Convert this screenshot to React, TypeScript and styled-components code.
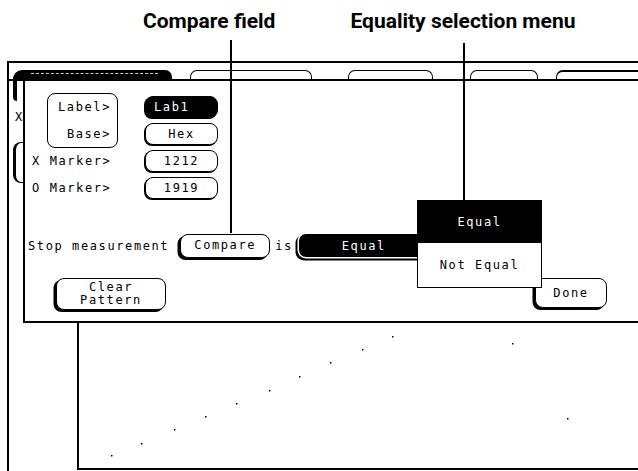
import React from "react";
import styled, { createGlobalStyle } from "styled-components";

const Global = createGlobalStyle`
  html, body { margin: 0; padding: 0; background: #fff; }
  body { width: 638px; height: 471px; overflow: hidden; }
`;

const HP = `"DejaVu Sans Mono", "Liberation Mono", monospace`;

const Page = styled.div`
  position: relative;
  width: 638px;
  height: 471px;
  overflow: hidden;
  background: #fff;
  color: #000;
  display: flex;
  flex-direction: column;
`;

const Header = styled.header`
  height: 61px;
  flex: none;
  display: flex;
  align-items: flex-start;
  padding-top: 10px;
  box-sizing: border-box;
`;

const Callout = styled.div<{ $left: number }>`
  margin-left: ${(p) => p.$left}px;
  font-family: Roboto, "Liberation Sans", sans-serif;
  font-weight: 700;
  font-size: 21px;
  line-height: 22px;
  white-space: nowrap;
`;

const Leader = styled.div`
  position: absolute;
  width: 1.5px;
  background: #000;
  z-index: 5;
`;

const Screen = styled.div`
  margin-left: 7px;
  flex: 1;
  min-height: 0;
  border-left: 2px solid #000;
  border-top: 2px solid #000;
  display: flex;
  flex-direction: column;
`;

const TabRow = styled.div`
  height: 16px;
  flex: none;
  border-bottom: 2px solid #000;
  display: flex;
  align-items: flex-end;
`;

const Tab = styled.div<{ $ml: number; $w: number; $bold?: boolean }>`
  flex: none;
  margin-left: ${(p) => p.$ml}px;
  width: ${(p) => p.$w}px;
  height: 9px;
  box-sizing: border-box;
  border: 1px solid #000;
  border-top-width: ${(p) => (p.$bold ? 2 : 1)}px;
  border-bottom: none;
  border-radius: 7px 7px 0 0;
`;

const ActiveTab = styled.div`
  flex: none;
  margin-left: 4px;
  width: 159px;
  height: 9px;
  background: #000;
  border-radius: 9px 7px 0 0;
  display: flex;
  align-items: flex-start;
  padding: 3px 14px 0 18px;
  box-sizing: border-box;
`;

const TabDots = styled.span`
  flex: 1;
  border-top: 1px dashed #fff;
  opacity: 0.8;
`;

const Body = styled.div`
  flex: 1;
  display: flex;
  flex-direction: column;
`;

const TopArea = styled.div`
  display: flex;
  flex: none;
`;

const Gutter = styled.div`
  width: 14px;
  flex: none;
  overflow: hidden;
  display: flex;
  flex-direction: column;
  align-items: flex-start;
`;

const Lip = styled.div`
  margin-left: 4px;
  width: 4px;
  height: 20px;
  background: #000;
  border-bottom-left-radius: 4px;
`;

const GhostText = styled.div`
  margin-top: 9px;
  margin-left: 6px;
  font-family: ${HP};
  font-size: 12px;
  line-height: 14px;
`;

const GhostBox = styled.div`
  margin-top: 18px;
  margin-left: 4px;
  width: 10px;
  height: 41px;
  box-sizing: border-box;
  border: 1.5px solid #000;
  border-left-width: 3px;
  border-right: none;
  border-radius: 8px 0 0 8px;
`;

const Dialog = styled.div`
  flex: 1;
  border-left: 2px solid #000;
  border-bottom: 2px solid #000;
  padding: 15px 0 11px 0;
  display: flex;
  flex-direction: column;
  font-family: ${HP};
  font-size: 12px;
  letter-spacing: 1.6px;
`;

const Grid = styled.div`
  margin-left: 5px;
  display: grid;
  grid-template-columns: 88px 73px;
  grid-auto-rows: 22px;
  column-gap: 27px;
  row-gap: 5px;
`;

const LabelBox = styled.div`
  grid-column: 1;
  grid-row: 1 / span 2;
  margin: -3px 0 -3px 17px;
  border: 1.5px solid #000;
  border-radius: 8px;
  display: flex;
  flex-direction: column;
  justify-content: space-around;
  align-items: flex-end;
  padding-right: 6px;
  line-height: 14px;
`;

const RowLabel = styled.div<{ $row: number }>`
  grid-column: 1;
  grid-row: ${(p) => p.$row};
  padding-left: 2px;
  align-self: center;
  line-height: 14px;
  white-space: nowrap;
`;

const Field = styled.div<{ $dark?: boolean; $row: number }>`
  grid-column: 2;
  grid-row: ${(p) => p.$row};
  box-sizing: border-box;
  border: 1.5px solid #000;
  border-radius: 8px;
  background: ${(p) => (p.$dark ? "#000" : "#fff")};
  color: ${(p) => (p.$dark ? "#fff" : "#000")};
  display: flex;
  align-items: center;
  justify-content: ${(p) => (p.$dark ? "flex-start" : "center")};
  padding-left: ${(p) => (p.$dark ? 8 : 0)}px;
  box-shadow: -1px 1px 0 #000;
  line-height: 14px;
`;

const StopRow = styled.div`
  margin-top: 34px;
  margin-left: 3px;
  height: 25px;
  display: flex;
  align-items: center;
  white-space: nowrap;
`;

const Button = styled.div<{ $w: number; $h: number; $ml?: number }>`
  flex: none;
  box-sizing: border-box;
  width: ${(p) => p.$w}px;
  height: ${(p) => p.$h}px;
  margin-left: ${(p) => p.$ml ?? 0}px;
  border: 1.5px solid #000;
  border-radius: 8px;
  background: #fff;
  box-shadow: -2.5px 2px 0 #000;
  display: flex;
  flex-direction: column;
  align-items: center;
  justify-content: center;
  line-height: 13px;
  text-align: center;
`;

const DarkButton = styled.div`
  flex: none;
  margin-left: 6px;
  width: 130px;
  height: 23px;
  box-sizing: border-box;
  background: #000;
  color: #fff;
  border-radius: 7px;
  box-shadow: 0 0 0 1.5px #fff, -2px 2px 0 1.5px #000;
  display: flex;
  align-items: center;
  justify-content: center;
  line-height: 14px;
`;

const Inline = styled.span<{ $ml: number }>`
  margin-left: ${(p) => p.$ml}px;
`;

const ButtonRow = styled.div`
  margin-top: 20px;
  padding: 0 31px;
  display: flex;
  justify-content: space-between;
  align-items: flex-start;
`;

const Chart = styled.div`
  margin-left: 68px;
  height: 145px;
  flex: none;
  border-left: 2px solid #000;
  border-bottom: 2px solid #000;
  position: relative;
`;

const Menu = styled.div`
  position: absolute;
  left: 417px;
  top: 200px;
  width: 125px;
  z-index: 4;
  font-family: ${HP};
  font-size: 12px;
  letter-spacing: 1.6px;
  display: flex;
  flex-direction: column;
`;

const MenuItem = styled.div<{ $active?: boolean }>`
  height: ${(p) => (p.$active ? 43 : 45)}px;
  box-sizing: border-box;
  background: ${(p) => (p.$active ? "#000" : "#fff")};
  color: ${(p) => (p.$active ? "#fff" : "#000")};
  border: 1.5px solid #000;
  border-top: ${(p) => (p.$active ? "1.5px solid #000" : "none")};
  display: flex;
  align-items: center;
  justify-content: center;
`;

const Specks = styled.svg`
  position: absolute;
  left: 0;
  top: 0;
  pointer-events: none;
`;

const dots: [number, number][] = [
  [32, 132],
  [62, 120],
  [95, 106],
  [126, 93],
  [157, 80],
  [190, 67],
  [220, 53],
  [251, 39],
  [283, 26],
  [313, 13],
  [433, 20],
  [488, 95],
];

export default function App() {
  return (
    <Page>
      <Global />
      <Header>
        <Callout $left={143}>Compare field</Callout>
        <Callout $left={75}>Equality selection menu</Callout>
      </Header>
      <Leader style={{ left: 230, top: 40, height: 193 }} />
      <Leader style={{ left: 463, top: 43, height: 157 }} />
      <Screen>
        <TabRow>
          <ActiveTab>
            <TabDots />
          </ActiveTab>
          <Tab $ml={18} $w={122} />
          <Tab $ml={36} $w={85} />
          <Tab $ml={37} $w={68} />
          <Tab $ml={18} $w={110} $bold />
        </TabRow>
        <Body>
          <TopArea>
            <Gutter>
              <Lip />
              <GhostText>X</GhostText>
              <GhostBox />
            </Gutter>
            <Dialog>
              <Grid>
                <LabelBox>
                  <span>Label&gt;</span>
                  <span>Base&gt;</span>
                </LabelBox>
                <RowLabel $row={3}>X Marker&gt;</RowLabel>
                <RowLabel $row={4}>O Marker&gt;</RowLabel>
                <Field $row={1} $dark>Lab1</Field>
                <Field $row={2}>Hex</Field>
                <Field $row={3}>1212</Field>
                <Field $row={4}>1919</Field>
              </Grid>
              <StopRow>
                <span>Stop measurement</span>
                <Button $w={90} $h={24} $ml={11}>Compare</Button>
                <Inline $ml={5}>is</Inline>
                <DarkButton>Equal</DarkButton>
              </StopRow>
              <ButtonRow>
                <Button $w={110} $h={32}>
                  <span>Clear</span>
                  <span>Pattern</span>
                </Button>
                <Button $w={72} $h={30}>Done</Button>
              </ButtonRow>
            </Dialog>
          </TopArea>
          <Chart>
            <Specks width="560" height="145">
              {dots.map(([x, y], i) => (
                <rect key={i} x={x} y={y} width="1.5" height="1.5" fill="#000" />
              ))}
            </Specks>
          </Chart>
        </Body>
      </Screen>
      <Menu>
        <MenuItem $active>Equal</MenuItem>
        <MenuItem>Not Equal</MenuItem>
      </Menu>
    </Page>
  );
}
